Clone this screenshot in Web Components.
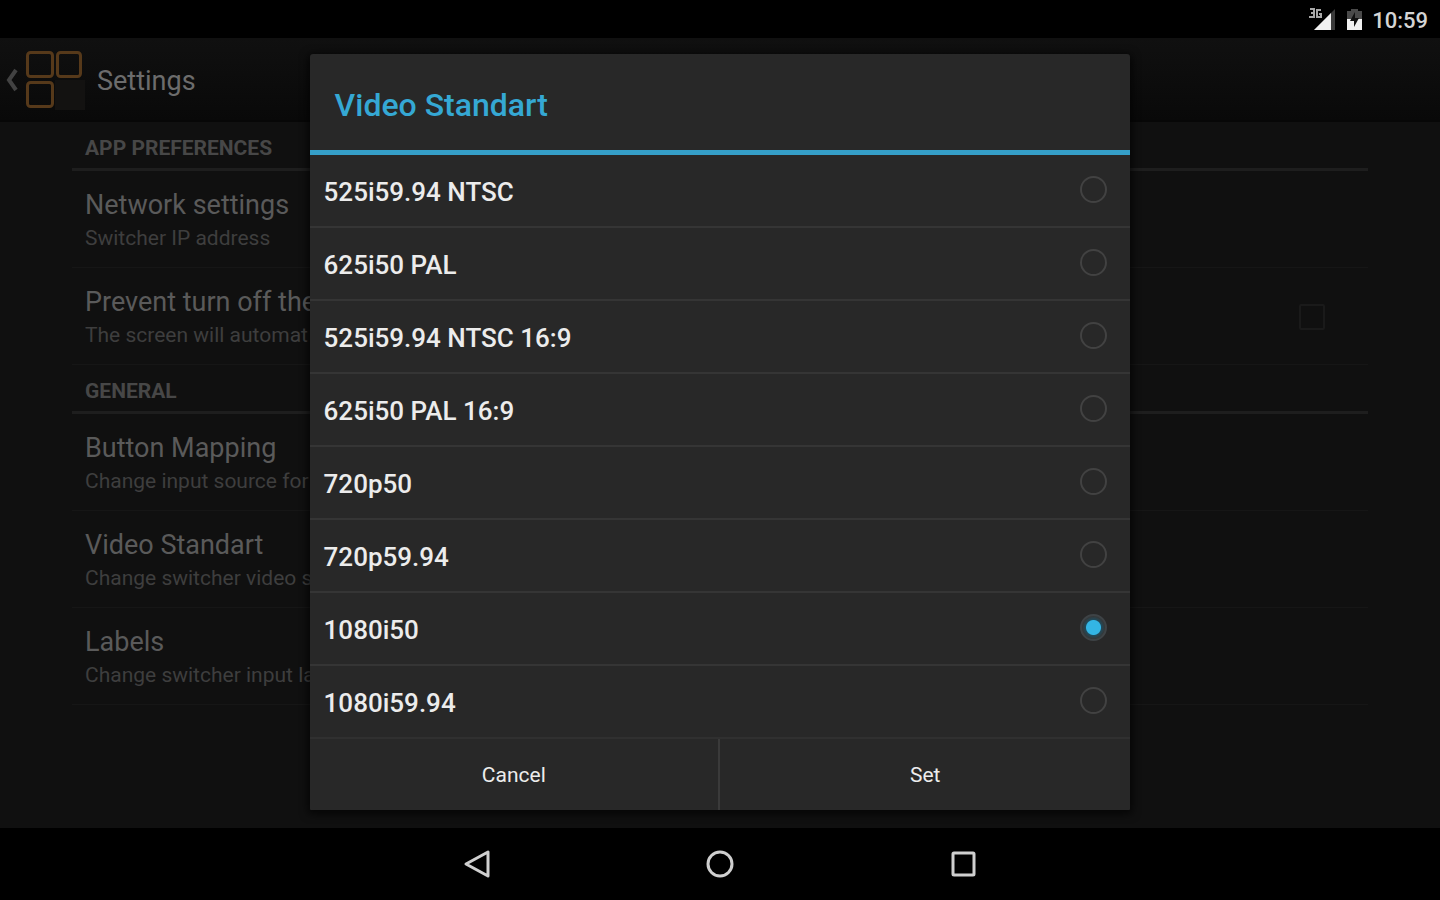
<!DOCTYPE html>
<html lang="en">
<head>
<meta charset="utf-8">
<meta name="viewport" content="width=device-width, initial-scale=1">
<title>Settings</title>
<style>
  body {
    margin: 0;
    background: #000;
    color: #ececec;
    font-family: Roboto, "Liberation Sans", sans-serif;
  }
</style>
</head>
<body>
<settings-screen></settings-screen>

<script>
class StatusBar extends HTMLElement {
  constructor () {
    super()
    this.attachShadow({ mode: 'open' })
  }

  connectedCallback () {
    this.shadowRoot.innerHTML = /* html */`
      <style>
        :host {
          display: flex;
          justify-content: flex-end;
          align-items: center;
          height: 38px;
          padding: 2px 12px 0 0;
          box-sizing: border-box;
          background: #000;
          color: #d4d4d4;
          font-size: 22px;
          font-weight: 500;
        }
        svg { display: block; }
        .signal { margin-right: 10px; }
        .battery { margin-right: 9px; }
      </style>
      <svg class="signal" width="28" height="24" viewBox="0 0 28 24" aria-hidden="true">
        <path d="M27 1V22H6z" fill="#3a3a3a"/>
        <path d="M23 5V22H6z" fill="#f0f0f0"/>
        <path d="M2 1h4v4H3h3v4H1M13 2H9v7h4V6h-2" fill="none" stroke="#a8a8a8" stroke-width="2"/>
      </svg>
      <svg class="battery" width="17" height="24" viewBox="0 0 17 24" aria-hidden="true">
        <path d="M1 12V3h4V1h7v2h4v9z" fill="#4a4a4a"/>
        <path d="M1 11h15v11H1z" fill="#f0f0f0"/>
        <path d="M9 4l-5 9h4v6l5-9H9z" fill="#111"/>
      </svg>
      <time>10:59</time>
    `
  }
}

class ActionBar extends HTMLElement {
  constructor () {
    super()
    this.attachShadow({ mode: 'open' })
  }

  connectedCallback () {
    this.shadowRoot.innerHTML = /* html */`
      <style>
        :host {
          display: flex;
          align-items: center;
          height: 84px;
          box-sizing: border-box;
          background: linear-gradient(#101010, #090909);
          border-bottom: 2px solid #070707;
        }
        button {
          display: flex;
          align-items: center;
          padding: 0 0 0 5px;
          border: 0;
          background: none;
        }
        h1 {
          margin: 0 0 0 12px;
          padding-top: 4px;
          color: #6c6c6c;
          font-size: 27px;
          line-height: 32px;
          font-weight: 400;
        }
      </style>
      <button type="button" aria-label="Back">
        <svg width="80" height="62" viewBox="0 0 80 62" aria-hidden="true">
          <path d="M11 22L4 32l7 10" fill="none" stroke="#424242" stroke-width="4"/>
          <path d="M50 32h30v30H50z" fill="#131211"/>
          <g fill="none" stroke="#56391a" stroke-width="3">
            <rect x="22.5" y="4.500" width="25" height="24" rx="3"/>
            <rect x="52.5" y="4.500" width="23" height="24" rx="3"/>
            <rect x="22.5" y="34.500" width="25" height="24" rx="3"/>
          </g>
        </svg>
      </button>
      <h1><slot></slot></h1>
    `
  }
}

class PreferenceGroup extends HTMLElement {
  constructor () {
    super()
    this.attachShadow({ mode: 'open' })
  }

  connectedCallback () {
    this.shadowRoot.innerHTML = /* html */`
      <style>
        :host { display: block; }
        h2 {
          margin: 0;
          padding: 14px 13px 8px;
          border-bottom: 3px solid #1e1e1e;
          color: #474747;
          font-size: 21px;
          line-height: 24px;
          font-weight: 700;
          text-transform: uppercase;
        }
      </style>
      <section>
        <h2>${this.getAttribute('label')}</h2>
        <slot></slot>
      </section>
    `
  }
}

class PreferenceItem extends HTMLElement {
  constructor () {
    super()
    this.attachShadow({ mode: 'open' })
  }

  connectedCallback () {
    const name = this.getAttribute('name')
    const checkbox = this.hasAttribute('checkable')
      ? `<input type="checkbox" aria-label="${name}">`
      : ''

    this.shadowRoot.innerHTML = /* html */`
      <style>
        :host {
          display: flex;
          align-items: center;
          justify-content: space-between;
          height: 97px;
          padding: 2px 43px 0 13px;
          box-sizing: border-box;
          border-bottom: 1px solid #161616;
          white-space: nowrap;
        }
        p { margin: 0; }
        .name {
          color: #5a5a5a;
          font-size: 27px;
          line-height: 36px;
        }
        .summary {
          color: #3e3e3e;
          font-size: 21px;
          line-height: 30px;
        }
        input {
          appearance: none;
          width: 26px;
          height: 26px;
          margin: 0;
          border: 2px solid #1a1a1a;
          border-radius: 2px;
        }
      </style>
      <div>
        <p class="name">${name}</p>
        <p class="summary"><slot></slot></p>
      </div>
      ${checkbox}
    `
  }
}

class OptionList extends HTMLElement {
  constructor () {
    super()
    this.attachShadow({ mode: 'open' })
    this.options = [
      '525i59.94 NTSC',
      '625i50 PAL',
      '525i59.94 NTSC 16:9',
      '625i50 PAL 16:9',
      '720p50',
      '720p59.94',
      '1080i50',
      '1080i59.94'
    ]
  }

  connectedCallback () {
    const selected = this.getAttribute('selected')
    const rows = this.options.map((option, i) => /* html */`
      <label for="option-${i}">
        <span>${option}</span>
        <input type="radio" name="standard" id="option-${i}" value="${option}" ${option === selected ? 'checked' : ''}>
      </label>
    `).join('')

    this.shadowRoot.innerHTML = /* html */`
      <style>
        :host { display: block; }
        fieldset {
          margin: 0;
          padding: 0;
          border: 0;
        }
        label {
          display: flex;
          align-items: center;
          justify-content: space-between;
          height: 73px;
          padding: 0 23px 2px 14px;
          box-sizing: border-box;
          border-bottom: 2px solid #353535;
          font-size: 26px;
          font-weight: 500;
        }
        label:last-child { border-bottom-color: #303030; }
        span { padding-top: 4px; }
        input {
          appearance: none;
          width: 27px;
          height: 27px;
          margin: 0;
          border: 2px solid #424242;
          border-radius: 50%;
        }
        input:checked {
          border-color: #3e4346;
          background: radial-gradient(circle, #33b5e5 7px, #214a5a 8px, #34393b 11px);
        }
      </style>
      <fieldset aria-label="Video standard">${rows}</fieldset>
    `
  }
}

class HoloDialog extends HTMLElement {
  constructor () {
    super()
    this.attachShadow({ mode: 'open' })
  }

  connectedCallback () {
    this.shadowRoot.innerHTML = /* html */`
      <style>
        :host {
          position: absolute;
          inset: 0;
          display: flex;
          align-items: center;
          justify-content: center;
          padding-bottom: 2px;
        }
        .panel {
          width: 57%;
          border-radius: 3px 3px 1px 1px;
          background: #282828;
          box-shadow: 0 2px 8px 2px rgba(0, 0, 0, .7);
        }
        h2 {
          margin: 0;
          padding: 32px 25px 26px;
          border-bottom: 5px solid #359fc8;
          color: #35a8d4;
          font-size: 32px;
          line-height: 38px;
          font-weight: 500;
        }
        footer {
          display: grid;
          grid-template-columns: 1fr 1fr;
        }
        button {
          height: 71px;
          padding: 0;
          border: 0;
          background: none;
          color: inherit;
          font: inherit;
          font-size: 21px;
        }
        button:first-child { border-right: 2px solid #3a3a3a; }
      </style>
      <div class="panel" role="dialog" aria-labelledby="title">
        <h2 id="title">${this.getAttribute('heading')}</h2>
        <slot></slot>
        <footer>
          <button type="button">Cancel</button>
          <button type="button">Set</button>
        </footer>
      </div>
    `
  }
}

class NavBar extends HTMLElement {
  constructor () {
    super()
    this.attachShadow({ mode: 'open' })
  }

  connectedCallback () {
    this.shadowRoot.innerHTML = /* html */`
      <style>
        :host { display: block; background: #000; }
        nav {
          display: flex;
          justify-content: center;
          height: 72px;
        }
        button {
          display: flex;
          align-items: center;
          justify-content: center;
          width: 243px;
          padding: 0;
          border: 0;
          background: none;
        }
        svg {
          fill: none;
          stroke: #cfcfcf;
          stroke-width: 3;
          stroke-linejoin: round;
        }
      </style>
      <nav>
        <button type="button" aria-label="Back">
          <svg width="32" height="32" viewBox="0 0 32 32"><path d="M27 4v24L5 16z"/></svg>
        </button>
        <button type="button" aria-label="Home">
          <svg width="32" height="32" viewBox="0 0 32 32"><circle cx="16" cy="16" r="12"/></svg>
        </button>
        <button type="button" aria-label="Recent apps">
          <svg width="32" height="32" viewBox="0 0 32 32"><rect x="6" y="5" width="21" height="22" rx="1"/></svg>
        </button>
      </nav>
    `
  }
}

class SettingsScreen extends HTMLElement {
  constructor () {
    super()
    this.attachShadow({ mode: 'open' })
  }

  connectedCallback () {
    this.shadowRoot.innerHTML = /* html */`
      <style>
        :host {
          display: flex;
          flex-direction: column;
          min-height: 100vh;
        }
        .stage {
          position: relative;
          flex: 1;
          background: #101010;
        }
        main { padding: 0 5%; }
      </style>
      <status-bar></status-bar>
      <div class="stage">
        <action-bar>Settings</action-bar>
        <main>
          <preference-group label="App preferences">
            <preference-item name="Network settings">Switcher IP address</preference-item>
            <preference-item name="Prevent turn off the" checkable>The screen will automat</preference-item>
          </preference-group>
          <preference-group label="General">
            <preference-item name="Button Mapping">Change input source for</preference-item>
            <preference-item name="Video Standart">Change switcher video s</preference-item>
            <preference-item name="Labels">Change switcher input la</preference-item>
          </preference-group>
        </main>
        <holo-dialog heading="Video Standart">
          <option-list selected="1080i50"></option-list>
        </holo-dialog>
      </div>
      <nav-bar></nav-bar>
    `
  }
}

customElements.define('status-bar', StatusBar)
customElements.define('action-bar', ActionBar)
customElements.define('preference-group', PreferenceGroup)
customElements.define('preference-item', PreferenceItem)
customElements.define('option-list', OptionList)
customElements.define('holo-dialog', HoloDialog)
customElements.define('nav-bar', NavBar)
customElements.define('settings-screen', SettingsScreen)
</script>
</body>
</html>
